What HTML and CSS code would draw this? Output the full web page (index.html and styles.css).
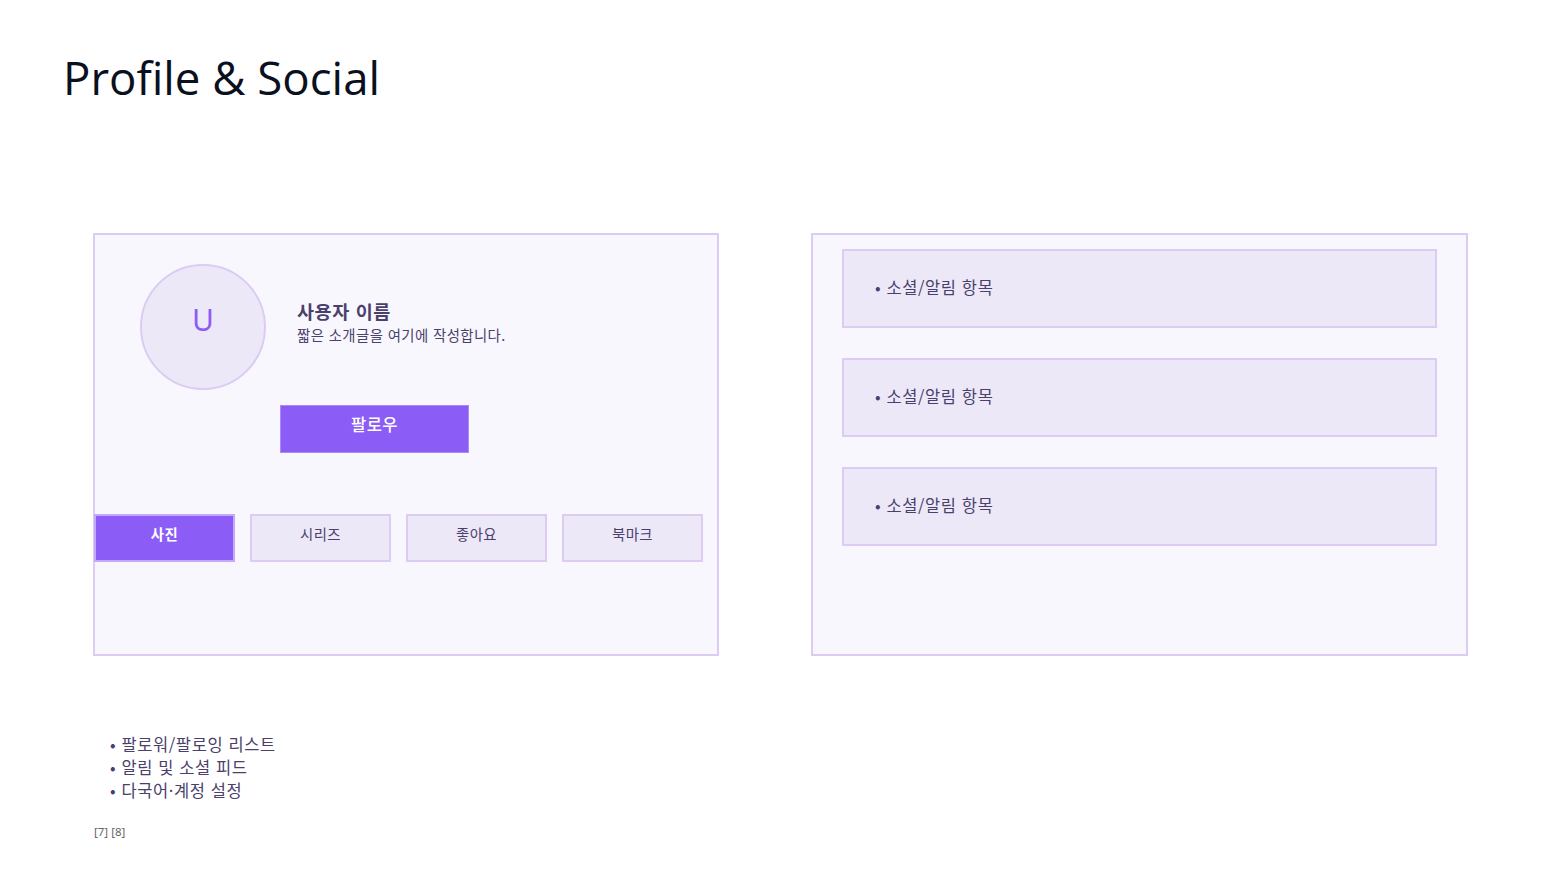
FILE: index.html
```html
<!DOCTYPE html>
<html lang="ko">
<head>
<meta charset="utf-8">
<title>Profile &amp; Social</title>
<link rel="stylesheet" href="styles.css">
</head>
<body>
<div class="page">
  <h1 class="title">Profile &amp; Social</h1>
  <div class="panels">
    <section class="panel panel-left">
      <div class="profile">
        <div class="avatar">U</div>
        <div class="info">
          <div class="name">사용자 이름</div>
          <div class="bio">짧은 소개글을 여기에 작성합니다.</div>
        </div>
      </div>
      <div class="follow">팔로우</div>
      <div class="tabs">
        <div class="tab active">사진</div>
        <div class="tab">시리즈</div>
        <div class="tab">좋아요</div>
        <div class="tab">북마크</div>
      </div>
    </section>
    <section class="panel panel-right">
      <div class="item">• 소셜/알림 항목</div>
      <div class="item">• 소셜/알림 항목</div>
      <div class="item">• 소셜/알림 항목</div>
    </section>
  </div>
  <ul class="notes">
    <li>• 팔로워/팔로잉 리스트</li>
    <li>• 알림 및 소셜 피드</li>
    <li>• 다국어·계정 설정</li>
  </ul>
  <div class="refs">[7] [8]</div>
</div>
</body>
</html>
```

FILE: styles.css
```css
* { box-sizing: border-box; }
html, body { margin: 0; padding: 0; background: #ffffff; }
body {
  font-family: "Noto Sans CJK KR", "Noto Sans", sans-serif;
  color: #4b3f6b;
}
.page {
  width: 1561px;
  height: 878px;
  padding: 0 0 0 63px;
  display: flex;
  flex-direction: column;
}
.title {
  margin: 47px 0 0 0;
  font-family: "Open Sans", "Noto Sans", sans-serif;
  font-weight: 400;
  font-size: 45.6px;
  line-height: 60px;
  color: #0b1020;
}
.panels {
  display: flex;
  gap: 92px;
  margin-top: 126px;
  margin-left: 30px;
}
.panel {
  border: 2px solid #dccbf2;
  background: #f8f7fe;
  height: 423px;
}
.panel-left {
  width: 626px;
  display: flex;
  flex-direction: column;
}
.panel-right {
  width: 657px;
  display: flex;
  flex-direction: column;
  gap: 30px;
  padding: 14px 29px 0 29px;
}
.profile {
  display: flex;
  align-items: flex-start;
  margin: 29px 0 0 45px;
}
.avatar {
  width: 126px;
  height: 126px;
  border-radius: 50%;
  border: 2px solid #dccbf2;
  background: #ece8f8;
  color: #8b5cf6;
  font-family: "Noto Sans", sans-serif;
  font-size: 30px;
  display: flex;
  align-items: center;
  justify-content: center;
  padding-bottom: 16px;
}
.info {
  margin-left: 31px;
  margin-top: 35px;
  display: flex;
  flex-direction: column;
}
.name {
  font-size: 18.5px;
  font-weight: 700;
  line-height: 24px;
  letter-spacing: 0.6px;
  color: #4b3f6b;
}
.bio {
  font-size: 14.4px;
  line-height: 20px;
  margin-top: 2px;
  letter-spacing: 0.4px;
  color: #4b3f6b;
}
.follow {
  margin: 15px 0 0 185px;
  width: 189px;
  height: 48px;
  background: #8b5cf6;
  border: 1px solid #a98af7;
  color: #ffffff;
  font-size: 16.5px;
  font-weight: 500;
  letter-spacing: 0.5px;
  display: flex;
  justify-content: center;
  padding-top: 7px;
  line-height: 22px;
}
.tabs {
  display: flex;
  gap: 15px;
  margin: 61px 0 0 -1px;
  width: 609px;
}
.tab {
  flex: 1;
  height: 48px;
  border: 2px solid #dccbf2;
  background: #ece8f8;
  font-size: 14.4px;
  line-height: 20px;
  letter-spacing: 0.4px;
  display: flex;
  justify-content: center;
  padding-top: 8px;
  color: #4b3f6b;
}
.tab.active {
  background: #8b5cf6;
  border-color: #c3a9f8;
  color: #ffffff;
  font-weight: 700;
}
.item {
  height: 79px;
  border: 2px solid #dccbf2;
  background: #ece8f8;
  font-size: 16.5px;
  line-height: 22px;
  letter-spacing: 0.6px;
  padding: 25px 0 0 31px;
  color: #4b3f6b;
}
.notes {
  list-style: none;
  margin: 77px 0 0 47px;
  padding: 0;
  font-size: 16.5px;
  line-height: 23px;
  letter-spacing: 0.6px;
  color: #4b3f6b;
}
.refs {
  margin: 23px 0 0 31px;
  font-family: "Noto Sans", sans-serif;
  font-size: 11.5px;
  line-height: 14px;
  color: #666666;
}
```
